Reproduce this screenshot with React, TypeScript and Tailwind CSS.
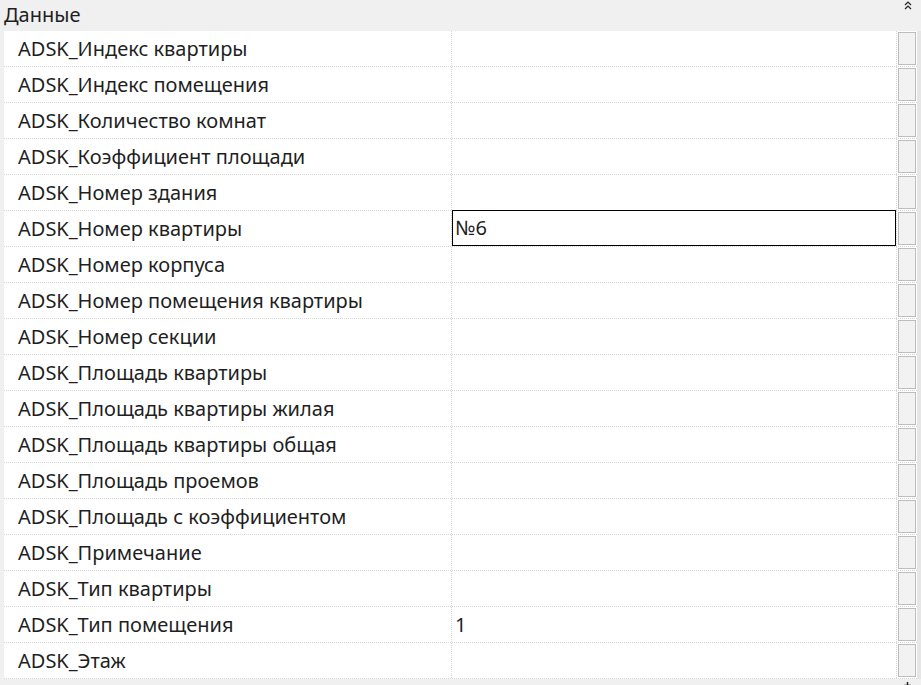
import React from 'react';

const rows: { name: string; value?: string; active?: boolean }[] = [
  { name: 'ADSK_Индекс квартиры' },
  { name: 'ADSK_Индекс помещения' },
  { name: 'ADSK_Количество комнат' },
  { name: 'ADSK_Коэффициент площади' },
  { name: 'ADSK_Номер здания' },
  { name: 'ADSK_Номер квартиры', value: '№6', active: true },
  { name: 'ADSK_Номер корпуса' },
  { name: 'ADSK_Номер помещения квартиры' },
  { name: 'ADSK_Номер секции' },
  { name: 'ADSK_Площадь квартиры' },
  { name: 'ADSK_Площадь квартиры жилая' },
  { name: 'ADSK_Площадь квартиры общая' },
  { name: 'ADSK_Площадь проемов' },
  { name: 'ADSK_Площадь с коэффициентом' },
  { name: 'ADSK_Примечание' },
  { name: 'ADSK_Тип квартиры' },
  { name: 'ADSK_Тип помещения', value: '1' },
  { name: 'ADSK_Этаж' },
];

export default function App() {
  return (
    <div className="w-[921px] h-[685px] bg-[#f0f0f0] overflow-hidden flex flex-col text-[#1f1f1f] font-['Noto_Sans',sans-serif]">
      {/* group header */}
      <div className="h-[31px] flex-none flex items-start justify-between pl-[4px] pr-[9px]">
        <span className="text-[20px] leading-[29px]">Данные</span>
        <svg width="8" height="9" viewBox="0 0 8 9" className="mt-[1px]">
          <path d="M1 4 L4 1 L7 4 M1 8 L4 5 L7 8" fill="none" stroke="#222" strokeWidth="1.2" />
        </svg>
      </div>

      <div className="flex flex-none">
        <div className="w-[4px]" />
        <div className="w-[913px] flex flex-col bg-white">
          {rows.map((r) => (
            <div key={r.name} className="h-[36px] flex border-b border-dotted border-[#d6d6d6]">
              <div className="w-[448px] flex items-center pl-[14px] text-[20px] border-r border-dotted border-[#d6d6d6]">
                {r.name}
              </div>
              {r.active ? (
                <div className="w-[444px] flex items-center px-[2px] text-[20px] border border-black bg-white -mt-px h-[36px]">
                  {r.value}
                </div>
              ) : (
                <div className="w-[444px] flex items-center pl-[3px] text-[20px]">{r.value}</div>
              )}
              <div className="w-[21px] flex items-center justify-end pr-[1px] border-l border-dotted border-[#d6d6d6]">
                <div className="w-[18px] h-[33px] bg-[#f2f2f2] border border-[#bdbdbd]" />
              </div>
            </div>
          ))}
        </div>
        <div className="w-[4px] bg-[#e6e6e6]" />
      </div>

      <div className="flex-1 flex justify-end pr-[10px]">
        <svg width="7" height="7" viewBox="0 0 7 7" className="mt-[3px]">
          <path d="M3.5 0 V7 M0 3.5 H7" stroke="#222" strokeWidth="1.5" />
        </svg>
      </div>
    </div>
  );
}
